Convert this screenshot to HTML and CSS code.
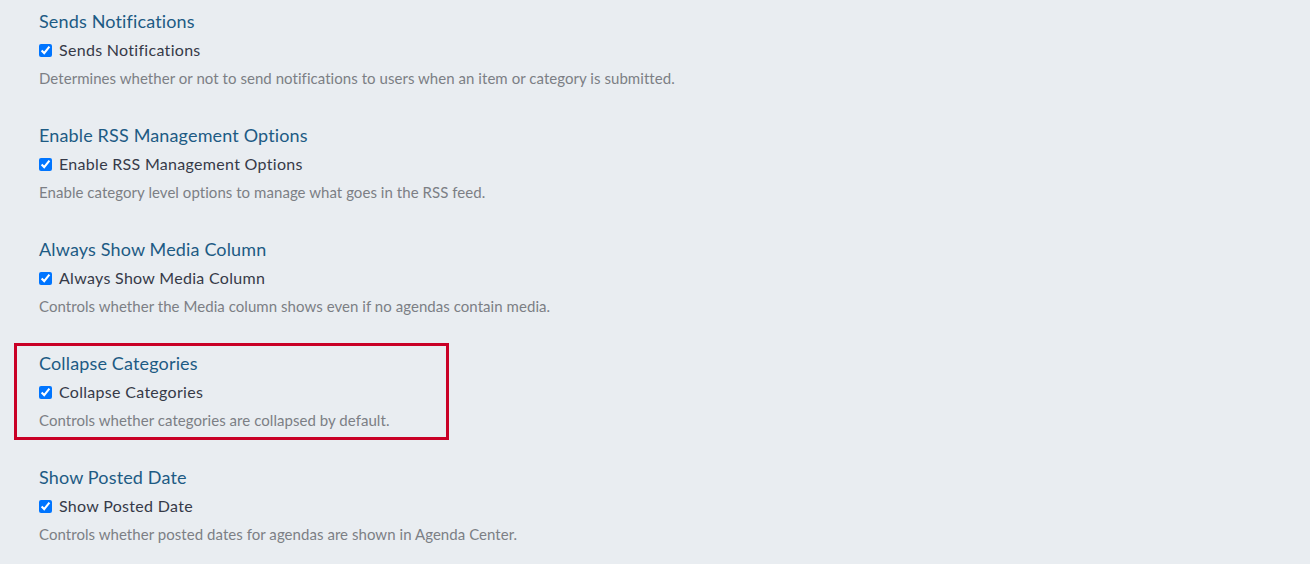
FILE: index.html
```html
<!DOCTYPE html>
<html lang="en">

<head>
    <meta charset="UTF-8">
    <meta name="viewport" content="width=device-width, initial-scale=1.0">
    <title>Agenda Settings</title>
    <link rel="stylesheet" href="styles.css">
</head>

<body>
    <div class="settings">
        <div class="setting">
            <h3>Sends Notifications</h3>
            <label class="check"><input type="checkbox" checked> Sends Notifications</label>
            <p class="desc">Determines whether or not to send notifications to users when an item or category is submitted.</p>
        </div>
        <div class="setting">
            <h3>Enable RSS Management Options</h3>
            <label class="check"><input type="checkbox" checked> Enable RSS Management Options</label>
            <p class="desc">Enable category level options to manage what goes in the RSS feed.</p>
        </div>
        <div class="setting">
            <h3>Always Show Media Column</h3>
            <label class="check"><input type="checkbox" checked> Always Show Media Column</label>
            <p class="desc">Controls whether the Media column shows even if no agendas contain media.</p>
        </div>
        <div class="setting highlight">
            <h3>Collapse Categories</h3>
            <label class="check"><input type="checkbox" checked> Collapse Categories</label>
            <p class="desc">Controls whether categories are collapsed by default.</p>
        </div>
        <div class="setting">
            <h3>Show Posted Date</h3>
            <label class="check"><input type="checkbox" checked> Show Posted Date</label>
            <p class="desc">Controls whether posted dates for agendas are shown in Agenda Center.</p>
        </div>
    </div>
</body>

</html>
```

FILE: styles.css
```css
* {
    margin: 0;
    padding: 0;
    box-sizing: border-box;
}

body {
    background-color: #e9edf1;
    font-family: Lato, "Open Sans", sans-serif;
    height: 100vh;
    overflow: hidden;
}

.settings {
    padding-left: 39px;
}

.setting {
    position: relative;
    padding: 10px 0 26px;
}

.setting h3 {
    font-size: 18px;
    font-weight: 400;
    line-height: 22px;
    letter-spacing: 0.15px;
    color: #1d5b84;
    margin-bottom: 8px;
}

.check {
    display: flex;
    align-items: center;
    gap: 7px;
    font-size: 16px;
    line-height: 20px;
    letter-spacing: 0.3px;
    color: #363a48;
}

.check input {
    width: 13px;
    height: 13px;
    margin: 0;
}

.desc {
    margin-top: 8px;
    font-size: 15px;
    line-height: 20px;
    letter-spacing: 0.05px;
    color: #7c7f85;
}

.highlight::after {
    content: "";
    box-sizing: border-box;
    position: absolute;
    top: 1px;
    left: -25px;
    width: 435px;
    height: 97px;
    border: 3px solid #c90026;
    pointer-events: none;
}
```
